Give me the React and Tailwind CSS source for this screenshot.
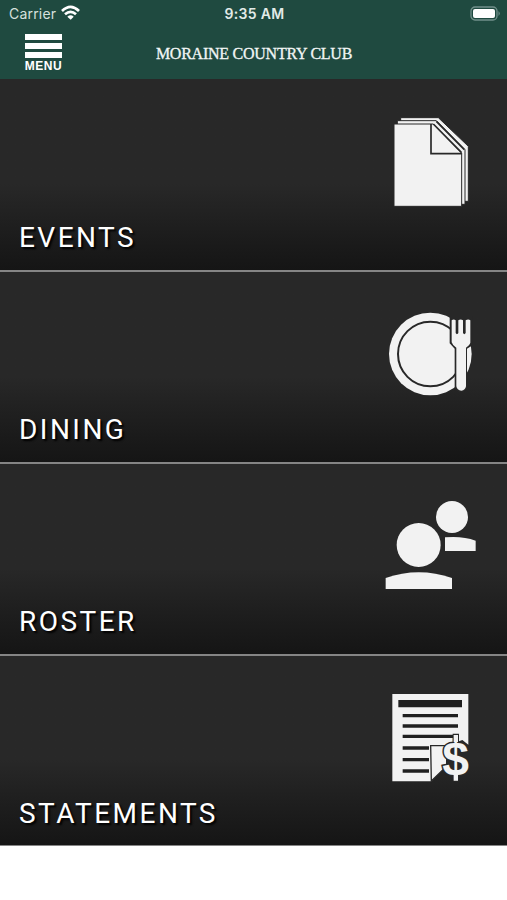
function EventsIcon() {
  return (
    <svg width="110" height="115" viewBox="0 0 330 345" fill="#f2f2f2" stroke="#282828" strokeWidth="3">
      <path d="M77 38H190L280 124V289H77Z" />
      <path d="M67 47H184L270 134V298H67Z" />
      <path d="M57 57H174L260 144V304H57Z" />
      <path d="M168 57V146H260" fill="none" strokeWidth="5" />
      <path d="M175 57L259 142M184 49L268 134" fill="none" strokeWidth="5" />
    </svg>
  )
}

function DiningIcon() {
  return (
    <svg width="110" height="115" viewBox="0 -9 330 345" fill="#f2f2f2">
      <circle cx="166" cy="162" r="124" />
      <circle cx="166" cy="162" r="97" fill="none" stroke="#282828" strokeWidth="6" />
      <path d="M224 50H293V136L276 146V262Q272 276 258 276Q242 276 239 262V146L224 130Z" fill="#282828" />
      <path d="M230 61Q236 56 242 61V99Q246 106 250 99V61Q257 56 264 61V99Q268 106 272 99V61Q280 56 286 61V128Q285 134 273 143V259Q271 271 259 272Q246 271 244 259V143Q232 135 230 127Z" />
    </svg>
  )
}

function RosterIcon() {
  return (
    <svg width="110" height="115" viewBox="0 -3 330 345" fill="#f2f2f2">
      <circle cx="231" cy="81" r="48" />
      <path d="M210 142Q262 137 302 152V183H210Z" />
      <circle cx="131" cy="165" r="66" />
      <path d="M32 264Q131 230 231 264V297H32Z" />
    </svg>
  )
}

function StatementsIcon() {
  return (
    <svg width="110" height="115" viewBox="0 3 330 345" fill="#f2f2f2">
      <path d="M52 42H280V194L262 180L220 196L200 270L169 304H52Z" />
      <path
        d="M70 60H261V82H70ZM83 102H249V112H83ZM83 133H249V143H83ZM83 164H249V174H83ZM83 199H162V209H83ZM83 234H162V244H83ZM83 268H162V278H83Z"
        fill="#202020"
      />
      <path d="M167 197H215V259L169 303Z" stroke="#282828" strokeWidth="4" />
      <path d="M235 163H250V190H235ZM235 276H250V303H235Z" stroke="#282828" strokeWidth="4" />
      <text
        x="242"
        y="284"
        textAnchor="middle"
        className="font-['Liberation_Sans',sans-serif] text-[144px] font-bold"
        stroke="#282828"
        strokeWidth="9"
        paintOrder="stroke"
      >
        $
      </text>
      <path d="M236 165H249V186H236ZM236 280H249V302H236Z" />
    </svg>
  )
}

const items = [
  { label: 'EVENTS', Icon: EventsIcon },
  { label: 'DINING', Icon: DiningIcon },
  { label: 'ROSTER', Icon: RosterIcon },
  { label: 'STATEMENTS', Icon: StatementsIcon },
]

function StatusBar() {
  return (
    <div className="grid h-7 grid-cols-3 items-center pl-[9px] pr-[7px] text-white">
      <div className="flex items-center gap-[5px]">
        <span className="text-[14px] leading-7 tracking-[0.2px] text-[#d6e0dd]">Carrier</span>
        <svg className="-mt-1" width="19" height="15" viewBox="0 0 57 45" fill="none" stroke="white" strokeWidth="8">
          <path d="M3 18Q29 -7 54 18M12 28Q29 13 45 28" />
          <path d="M19 35Q29 27 38 35L29 44Z" fill="white" stroke="none" />
        </svg>
      </div>
      <span className="-mt-0.5 text-center text-[14px] font-semibold tracking-[0.3px] text-[#e2eae8]">9:35 AM</span>
      <svg className="-mt-0.5 justify-self-end" width="30" height="15" viewBox="0 0 30 15">
        <rect x="1" y="1" width="26" height="13" rx="4" fill="none" stroke="#71908a" strokeWidth="1.3" />
        <rect x="3" y="3" width="22" height="9" rx="2" fill="white" />
        <path d="M28.500 5Q31 7.500 28.500 10Z" fill="#71908a" />
      </svg>
    </div>
  )
}

function MenuButton() {
  return (
    <button className="flex w-[39px] flex-col items-center pt-[6px] text-white">
      <span className="flex w-[37px] flex-col gap-[3px]">
        <span className="h-[6px] bg-white" />
        <span className="h-[6px] bg-white" />
        <span className="h-[6px] bg-white" />
      </span>
      <span className="mt-[2px] font-['Liberation_Sans',sans-serif] text-[12px] font-bold leading-3 tracking-[0.5px]">
        MENU
      </span>
    </button>
  )
}

export default function App() {
  return (
    <div className="flex h-[900px] w-[507px] flex-col overflow-hidden bg-white font-['Inter',sans-serif]">
      <header className="h-[79px] shrink-0 bg-[#1f4a40]">
        <StatusBar />
        <div className="grid h-[51px] grid-cols-[39px_1fr_39px] items-start px-6">
          <MenuButton />
          <h1 className="whitespace-nowrap pl-px pt-[14px] text-center font-['Liberation_Serif',serif] text-[16px] leading-6 tracking-[-0.25px] text-[#f2f6f5] [-webkit-text-stroke:0.3px_#f2f6f5]">
            MORAINE COUNTRY CLUB
          </h1>
        </div>
      </header>
      <main>
        {items.map(({ label, Icon }) => (
          <a
            key={label}
            className="flex h-48 flex-col border-t-2 border-[#858585] bg-linear-to-b from-[#282828] from-55% to-[#151515] pl-[19px] pr-[22px] pt-[25px] first:h-[191px] first:border-t-0 first:pt-[26px] last:border-b"
          >
            <span className="self-end">
              <Icon />
            </span>
            <span className="pt-px font-['Roboto',sans-serif] text-[28px] leading-[34px] tracking-[2.45px] text-white [text-shadow:2px_2px_2px_#000]">
              {label}
            </span>
          </a>
        ))}
      </main>
    </div>
  )
}
